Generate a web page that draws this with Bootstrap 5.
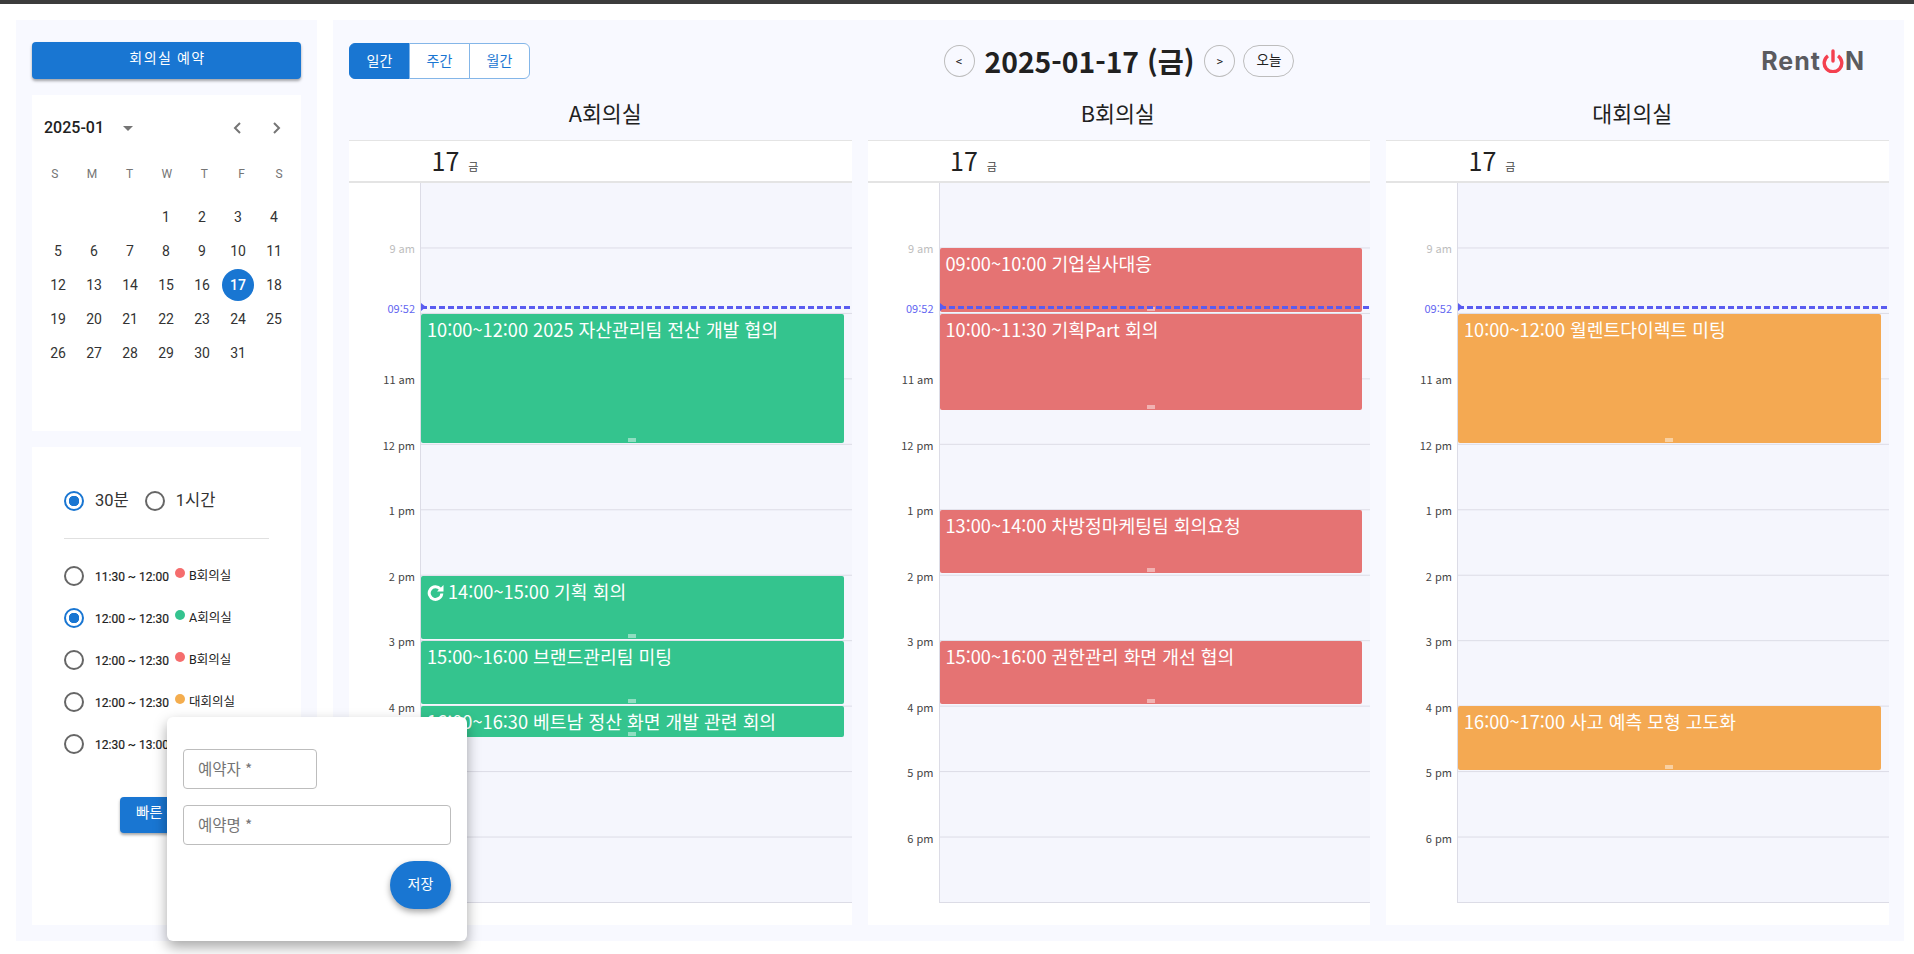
<!DOCTYPE html>
<html lang="ko">

<head>
  <meta charset="UTF-8">
  <meta name="viewport" content="width=device-width, initial-scale=1.0">
  <title>회의실 예약</title>
  <link href="https://cdn.jsdelivr.net/npm/bootstrap@5.3.0/dist/css/bootstrap.min.css" rel="stylesheet">
  <style>
    body {
      height: 954px;
      overflow: hidden;
      background: #fff;
      border-top: 4px solid #3c3c3c;
      font-family: Roboto, "Noto Sans CJK KR", sans-serif;
      color: #212121;
    }

    .page-wrap {
      position: relative;
      display: flex;
      gap: 16px;
      padding: 16px 10px 0 16px;
      height: 937px;
    }

    .side-panel {
      width: 301px;
      flex: none;
      padding: 22px 16px 16px;
      background: #f8f9ff;
    }

    .main-panel {
      flex: 1;
      padding: 23px 14px 16px 16px;
      background: #f8f9ff;
      font-family: "Noto Sans CJK KR", sans-serif;
      min-width: 0;
    }

    .btn-blue {
      background: #1976d2;
      color: #fff;
      font-size: 14px;
      border: 0;
      border-radius: 4px;
      box-shadow: 0 2px 3px rgba(0, 0, 0, .35);
    }

    .btn-blue:hover {
      background: #1976d2;
      color: #fff;
    }

    .reserve-btn {
      height: 37px;
      padding: 0 0 4px 2px;
      letter-spacing: 1.4px;
    }

    .cal-card {
      height: 336px;
      margin-top: 16px;
      padding: 12px 12px 0;
      background: #fff;
    }

    .cal-head {
      height: 40px;
      margin-top: 1px;
      padding-right: 7px;
    }

    .cal-month {
      font-size: 16px;
      font-weight: 500;
    }

    .cal-caret {
      width: 0;
      height: 0;
      margin-left: 19px;
      border-left: 5px solid transparent;
      border-right: 5px solid transparent;
      border-top: 5px solid #757575;
    }

    .cal-arrows {
      gap: 30px;
    }

    .cal-week {
      display: grid;
      grid-template-columns: repeat(7, 37.4px);
      margin: 9px 0 11px -8px;
      color: #757575;
      font-size: 12px;
      line-height: 34px;
      text-align: center;
    }

    .cal-days {
      display: grid;
      grid-template-columns: repeat(7, 36px);
      grid-auto-rows: 34px;
      margin-top: -2px;
      margin-left: -4px;
      font-size: 14px;
      text-align: center;
      line-height: 34px;
      color: #333;
    }

    .cal-today {
      width: 32px;
      height: 32px;
      margin: 1px auto;
      line-height: 32px;
      border-radius: 50%;
      background: #1976d2;
      color: #fff;
      font-weight: 500;
    }

    .slot-card {
      height: 478px;
      margin-top: 16px;
      padding: 44px 32px 0;
      background: #fff;
    }

    .radio-dot {
      display: inline-block;
      flex: none;
      width: 20px;
      height: 20px;
      border: 2px solid #666;
      border-radius: 50%;
    }

    .radio-dot.is-on {
      border-color: #1976d2;
      background: radial-gradient(circle, #1976d2 0 5px, transparent 5.5px);
    }

    .unit-row {
      height: 20px;
      font-size: 16.5px;
      color: #333;
    }

    .unit-row span {
      margin: 0 16px 0 11px;
    }

    .slot-rule {
      width: 205px;
      margin: 27px 0 16px;
      border-top: 1px solid #e0e0e0;
      opacity: 1;
    }

    .slot-row {
      height: 42px;
      align-items: center;
      white-space: nowrap;
      font-size: 12px;
    }

    .slot-time {
      width: 76px;
      margin-left: 11px;
      margin-top: 2px;
      -webkit-text-stroke: .2px #212121;
    }

    .slot-dot {
      width: 10px;
      height: 10px;
      margin: -6px 4px 0 4px;
      border-radius: 50%;
    }

    .slot-room {
      font-size: 12.5px;
      margin-top: 1px;
    }

    .dot-red {
      background: #f56d6d;
    }

    .dot-green {
      background: #34c38f;
    }

    .dot-orange {
      background: #f4ad4e;
    }

    .quick-btn {
      width: 130px;
      height: 36px;
      margin: 32px 0 0 56px;
      padding: 0 0 2px 16px;
      font-size: 14.5px;
      text-align: left;
    }

    .quick-pop {
      position: absolute;
      left: 167px;
      top: 713px;
      width: 300px;
      height: 224px;
      padding: 32px 16px;
      background: #fff;
      border-radius: 6px;
      box-shadow: 0 6px 14px rgba(0, 0, 0, .35);
      font-family: "Noto Sans CJK KR", sans-serif;
    }

    .pop-input {
      height: 40px;
      padding: 0 14px;
      font-size: 15.5px;
      border: 1px solid #bdbdbd;
      border-radius: 4px;
      line-height: 37px;
      color: #757575;
    }

    .pop-name {
      width: 134px;
      margin-bottom: 16px;
    }

    .pop-save {
      display: block;
      width: 61px;
      height: 48px;
      margin: 16px 0 0 auto;
      padding: 0 0 3px;
      border-radius: 24px;
      background: #1976d2;
      color: #fff;
      border: 0;
      font-size: 14px;
      box-shadow: 0 3px 6px rgba(0, 0, 0, .35);
    }

    .cal-toolbar {
      position: relative;
      height: 36px;
    }

    .view-btn {
      width: 61px;
      height: 36px;
      padding: 0 0 3px;
      font-size: 14px;
      line-height: 1;
      background: #fff;
      color: #1976d2;
      border-color: #84b6e8;
    }

    .view-btn.is-on {
      background: #1976d2;
      border-color: #1976d2;
      color: #fff;
    }

    .date-nav {
      position: absolute;
      left: 594.5px;
      top: 2px;
    }

    .round-btn {
      width: 31px;
      height: 32px;
      padding: 0;
      border: 1px solid #bdbdbd;
      border-radius: 50%;
      background: transparent;
      font-size: 11px;
      font-weight: 500;
      line-height: 1;
      color: #212121;
    }

    .today-btn {
      width: 51px;
      margin-left: 8px;
      padding-bottom: 2px;
      border-radius: 16px;
      font-size: 13.5px;
      font-weight: 400;
    }

    .date-title {
      margin: 0 10px;
      font-size: 28.3px;
      font-weight: 700;
      line-height: 32px;
      color: #212121;
    }

    .logo-box {
      position: absolute;
      right: 25px;
      top: 4px;
      display: flex;
      align-items: center;
      height: 28px;
      font-family: Inter, sans-serif;
      font-size: 25px;
      font-weight: 700;
      line-height: 24px;
      color: #5b5b5f;
      letter-spacing: 1px;
    }

    .room-grid {
      display: grid;
      grid-template-columns: repeat(3, 502.5px);
      gap: 16px;
    }

    .room-title {
      height: 61px;
      padding-top: 19px;
      text-align: center;
      font-size: 21.7px;
      line-height: 30px;
    }

    .title-a {
      padding-left: 10px;
    }

    .title-b {
      padding-right: 2px;
    }

    .title-c {
      padding-right: 10px;
    }

    .day-head {
      height: 43px;
      padding-left: 82.5px;
      background: #fff;
      border-top: 1px solid #e4e4e4;
      border-bottom: 2px solid #e4e4e4;
      line-height: 38px;
      font-size: 25px;
    }

    .day-head small {
      margin-left: 2px;
      font-size: 11px;
      color: #444;
    }

    .day-body {
      display: flex;
      height: 742px;
      background: #fff;
    }

    .hour-gutter {
      flex: none;
      width: 71px;
      height: 720px;
      font-size: 11px;
      color: #444;
    }

    .hour-slot {
      height: 65.4545px;
      padding-right: 5px;
      display: flex;
      justify-content: flex-end;
      align-items: flex-end;
      line-height: 16px;
    }

    .hour-slot span {
      margin-bottom: -8px;
    }

    .hour-slot .hour-past {
      color: #bdbdbd;
    }

    .hour-slot .hour-now {
      margin-bottom: -2px;
      color: #6366f1;
    }

    .hour-track {
      position: relative;
      flex: 1;
      height: 720px;
      background-color: #f5f6fd;
      background-image: linear-gradient(to top, #dcdce6 1px, transparent 1px);
      background-size: 100% 65.4545px;
      border-left: 1px solid #dcdce6;
    }

    .appt {
      position: absolute;
      left: 0;
      right: 8px;
      padding: 3px 6px;
      overflow: hidden;
      border-radius: 2px;
      color: #fff;
      font-size: 18.2px;
      line-height: 25px;
      white-space: nowrap;
    }

    .appt::after {
      content: "";
      position: absolute;
      left: 50%;
      bottom: 1px;
      width: 8px;
      height: 4px;
      margin-left: -4px;
      background: rgba(255, 255, 255, .45);
    }

    .appt-green {
      background: #34c48e;
    }

    .appt-red {
      background: #e57373;
    }

    .appt-orange {
      background: #f4a952;
    }

    .repeat-icon {
      width: 17px;
      height: 17px;
      margin: 0 4px 0 0;
      vertical-align: -2px;
    }

    .now-line {
      position: absolute;
      left: 0;
      right: 0;
      top: 123px;
      height: 3px;
      background: repeating-linear-gradient(to right, #5a5cf0 0 6px, transparent 6px 9px);
    }

    .now-line::before {
      content: "";
      position: absolute;
      left: 0;
      top: -3px;
      border-left: 5px solid #5a5cf0;
      border-top: 4.5px solid transparent;
      border-bottom: 4.5px solid transparent;
    }
  </style>
</head>

<body>
  <div class="page-wrap">
    <!-- left column -->
    <aside class="side-panel">
      <button type="button" class="btn btn-blue reserve-btn w-100 d-block">회의실 예약</button>

      <div class="cal-card">
        <div class="cal-head d-flex align-items-center">
          <span class="cal-month">2025-01</span>
          <span class="cal-caret"></span>
          <div class="cal-arrows d-flex ms-auto">
            <svg width="10" height="14" viewBox="0 0 10 14"><path d="M8 2 3 7l5 5" fill="none" stroke="#757575" stroke-width="2"/></svg>
            <svg width="10" height="14" viewBox="0 0 10 14"><path d="m2 2 5 5-5 5" fill="none" stroke="#757575" stroke-width="2"/></svg>
          </div>
        </div>
        <div class="cal-week">
          <span>S</span><span>M</span><span>T</span><span>W</span><span>T</span><span>F</span><span>S</span>
        </div>
        <div class="cal-days">
          <span></span><span></span><span></span>
          <span>1</span><span>2</span><span>3</span><span>4</span>
          <span>5</span><span>6</span><span>7</span><span>8</span><span>9</span><span>10</span><span>11</span>
          <span>12</span><span>13</span><span>14</span><span>15</span><span>16</span><span><div class="cal-today">17</div></span><span>18</span>
          <span>19</span><span>20</span><span>21</span><span>22</span><span>23</span><span>24</span><span>25</span>
          <span>26</span><span>27</span><span>28</span><span>29</span><span>30</span><span>31</span>
        </div>
      </div>

      <div class="slot-card">
        <div class="unit-row d-flex align-items-center">
          <i class="radio-dot is-on"></i><span>30분</span>
          <i class="radio-dot"></i><span>1시간</span>
        </div>
        <hr class="slot-rule">
        <div class="d-flex slot-row"><i class="radio-dot"></i><span class="slot-time">11:30 ~ 12:00</span><i class="slot-dot dot-red"></i><span class="slot-room">B회의실</span></div>
        <div class="d-flex slot-row"><i class="radio-dot is-on"></i><span class="slot-time">12:00 ~ 12:30</span><i class="slot-dot dot-green"></i><span class="slot-room">A회의실</span></div>
        <div class="d-flex slot-row"><i class="radio-dot"></i><span class="slot-time">12:00 ~ 12:30</span><i class="slot-dot dot-red"></i><span class="slot-room">B회의실</span></div>
        <div class="d-flex slot-row"><i class="radio-dot"></i><span class="slot-time">12:00 ~ 12:30</span><i class="slot-dot dot-orange"></i><span class="slot-room">대회의실</span></div>
        <div class="d-flex slot-row"><i class="radio-dot"></i><span class="slot-time">12:30 ~ 13:00</span></div>
        <button type="button" class="btn btn-blue quick-btn">빠른 예약</button>
      </div>
    </aside>

    <!-- calendar -->
    <main class="main-panel">
      <div class="cal-toolbar">
        <div class="btn-group">
          <button type="button" class="btn view-btn is-on">일간</button>
          <button type="button" class="btn view-btn">주간</button>
          <button type="button" class="btn view-btn">월간</button>
        </div>
        <div class="date-nav d-flex align-items-center">
          <button type="button" class="round-btn">&lt;</button>
          <span class="date-title">2025-01-17 (금)</span>
          <button type="button" class="round-btn">&gt;</button>
          <button type="button" class="round-btn today-btn">오늘</button>
        </div>
        <div class="logo-box">Rent<svg width="24" height="24" viewBox="0 0 24 24"><path d="M6.950 6.800a8.800 8.800 0 1 0 10.100 0" fill="none" stroke="#f4404f" stroke-width="3.400"/><path d="M12 2v10" stroke="#f4404f" stroke-width="3.400" stroke-linecap="round"/></svg>N</div>
      </div>

      <div class="room-grid">
        <section>
          <div class="room-title title-a">A회의실</div>
          <div class="day-head">17 <small>금</small></div>
          <div class="day-body">
            <div class="hour-gutter">
              <div class="hour-slot"><span class="hour-past">9 am</span></div>
              <div class="hour-slot"><span class="hour-now">09:52</span></div>
              <div class="hour-slot"><span>11 am</span></div>
              <div class="hour-slot"><span>12 pm</span></div>
              <div class="hour-slot"><span>1 pm</span></div>
              <div class="hour-slot"><span>2 pm</span></div>
              <div class="hour-slot"><span>3 pm</span></div>
              <div class="hour-slot"><span>4 pm</span></div>
              <div class="hour-slot"><span>5 pm</span></div>
              <div class="hour-slot"><span>6 pm</span></div>
            </div>
            <div class="hour-track">
              <div class="appt appt-green" style="top:131px;height:129px">10:00~12:00 2025 자산관리팀 전산 개발 협의</div>
              <div class="appt appt-green" style="top:393px;height:63px"><svg class="repeat-icon" viewBox="0 0 17 17"><path d="M13.300 5A6.300 6.300 0 1 0 14.800 9.500" fill="none" stroke="#fff" stroke-width="3"/><path d="M16.500 1v6.500H10z" fill="#fff"/></svg>14:00~15:00 기획 회의</div>
              <div class="appt appt-green" style="top:458px;height:63px">15:00~16:00 브랜드관리팀 미팅</div>
              <div class="appt appt-green" style="top:523px;height:31px">16:00~16:30 베트남 정산 화면 개발 관련 회의</div>
              <div class="now-line"></div>
            </div>
          </div>
        </section>

        <section>
          <div class="room-title title-b">B회의실</div>
          <div class="day-head">17 <small>금</small></div>
          <div class="day-body">
            <div class="hour-gutter">
              <div class="hour-slot"><span class="hour-past">9 am</span></div>
              <div class="hour-slot"><span class="hour-now">09:52</span></div>
              <div class="hour-slot"><span>11 am</span></div>
              <div class="hour-slot"><span>12 pm</span></div>
              <div class="hour-slot"><span>1 pm</span></div>
              <div class="hour-slot"><span>2 pm</span></div>
              <div class="hour-slot"><span>3 pm</span></div>
              <div class="hour-slot"><span>4 pm</span></div>
              <div class="hour-slot"><span>5 pm</span></div>
              <div class="hour-slot"><span>6 pm</span></div>
            </div>
            <div class="hour-track">
              <div class="appt appt-red" style="top:65px;height:64px">09:00~10:00 기업실사대응</div>
              <div class="appt appt-red" style="top:131px;height:96px">10:00~11:30 기획Part 회의</div>
              <div class="appt appt-red" style="top:327px;height:63px">13:00~14:00 차방정마케팅팀 회의요청</div>
              <div class="appt appt-red" style="top:458px;height:63px">15:00~16:00 권한관리 화면 개선 협의</div>
              <div class="now-line"></div>
            </div>
          </div>
        </section>

        <section>
          <div class="room-title title-c">대회의실</div>
          <div class="day-head">17 <small>금</small></div>
          <div class="day-body">
            <div class="hour-gutter">
              <div class="hour-slot"><span class="hour-past">9 am</span></div>
              <div class="hour-slot"><span class="hour-now">09:52</span></div>
              <div class="hour-slot"><span>11 am</span></div>
              <div class="hour-slot"><span>12 pm</span></div>
              <div class="hour-slot"><span>1 pm</span></div>
              <div class="hour-slot"><span>2 pm</span></div>
              <div class="hour-slot"><span>3 pm</span></div>
              <div class="hour-slot"><span>4 pm</span></div>
              <div class="hour-slot"><span>5 pm</span></div>
              <div class="hour-slot"><span>6 pm</span></div>
            </div>
            <div class="hour-track">
              <div class="appt appt-orange" style="top:131px;height:129px">10:00~12:00 월렌트다이렉트 미팅</div>
              <div class="appt appt-orange" style="top:523px;height:64px">16:00~17:00 사고 예측 모형 고도화</div>
              <div class="now-line"></div>
            </div>
          </div>
        </section>
      </div>
    </main>

    <!-- quick reserve popup -->
    <div class="quick-pop">
      <div class="pop-input pop-name">예약자 *</div>
      <div class="pop-input">예약명 *</div>
      <button type="button" class="pop-save">저장</button>
    </div>
  </div>

  <script src="https://cdn.jsdelivr.net/npm/bootstrap@5.3.0/dist/js/bootstrap.bundle.min.js"></script>
</body>

</html>
